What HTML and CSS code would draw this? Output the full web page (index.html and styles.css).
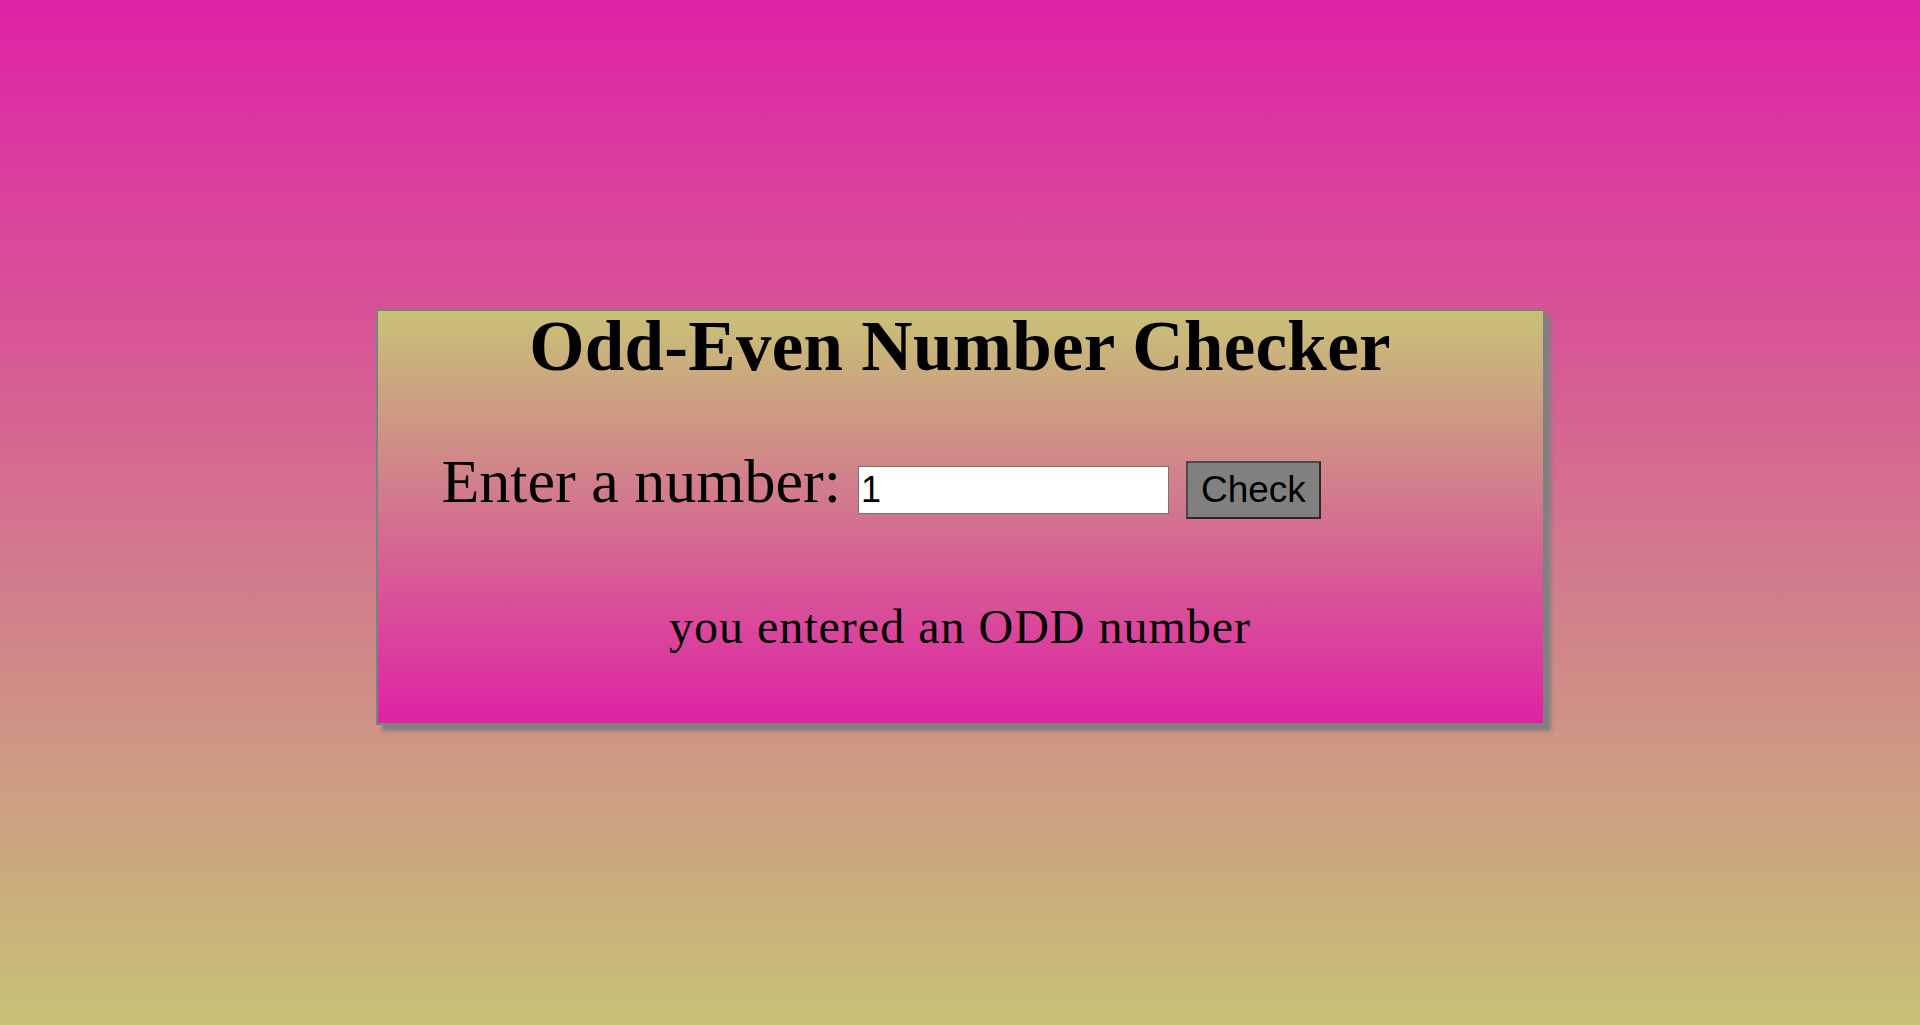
FILE: index.html
```html
<!DOCTYPE html>
<html lang="en">
<head>
<meta charset="utf-8">
<title>Odd-Even Number Checker</title>
<link rel="stylesheet" href="styles.css">
</head>
<body>
  <main class="card">
    <h1 class="title">Odd-Even Number Checker</h1>
    <div class="row">
      <label class="label" for="num">Enter a number:</label>
      <input class="num-input" id="num" type="text" value="1">
      <button class="check-btn" type="button">Check</button>
    </div>
    <p class="result">you entered an ODD number</p>
  </main>
</body>
</html>
```
FILE: styles.css
```css
html, body {
  margin: 0;
  padding: 0;
}
body {
  min-height: 1025px;
  box-sizing: border-box;
  background: linear-gradient(to bottom, #df22a6 0%, #c8c277 100%);
  display: flex;
  flex-direction: column;
  align-items: center;
  padding-top: 309px;
  font-family: "Liberation Serif", "Times New Roman", serif;
}
.card {
  width: 1169px;
  height: 416px;
  box-sizing: border-box;
  border: 2px solid #808080;
  box-shadow: 6px 6px 4px #808080;
  background: linear-gradient(to bottom, #c8c277 0%, #df22a6 100%);
  display: flex;
  flex-direction: column;
  align-items: stretch;
}
.title {
  margin: 0;
  text-align: center;
  font-family: "Liberation Serif", serif;
  font-weight: 700;
  font-size: 71px;
  line-height: 70px;
  letter-spacing: 0.3px;
  color: #000;
}
.row {
  margin-top: 65px;
  padding-left: 64px;
  display: flex;
  align-items: baseline;
  gap: 17px;
}
.label {
  font-family: "Liberation Serif", serif;
  font-size: 62px;
  color: #000;
}
.num-input {
  width: 311px;
  height: 48px;
  box-sizing: border-box;
  border: 1px solid #767676;
  padding: 1px 2px;
  background: #fff;
  font-family: "Liberation Sans", Arial, sans-serif;
  font-size: 36px;
  color: #000;
}
.check-btn {
  font-family: "Liberation Sans", Arial, sans-serif;
  font-size: 37px;
  color: #000;
  background: #808080;
  border: 2px solid;
  border-color: #4a4a4a #2a2a2a #2a2a2a #4a4a4a;
  padding: 6px 13px;
  line-height: normal;
}
.result {
  margin: 80px 0 0;
  text-align: center;
  font-family: "Liberation Serif", serif;
  font-size: 48px;
  letter-spacing: 1px;
  color: #000;
}
```
